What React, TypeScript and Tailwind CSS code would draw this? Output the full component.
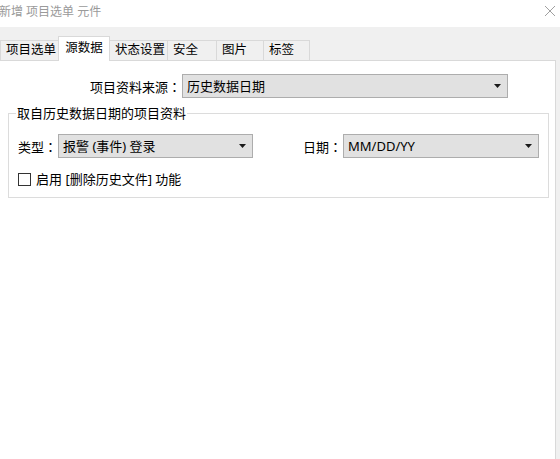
const tabs = [
  { label: "项目选单", w: "w-[59px]" },
  { label: "源数据", w: "w-[52px]" },
  { label: "状态设置", w: "w-[59px]" },
  { label: "安全", w: "w-[50px]" },
  { label: "图片", w: "w-[48px]" },
  { label: "标签", w: "w-[47px]" },
];

function Arrow() {
  return (
    <svg width="7" height="4" viewBox="0 0 7 4" className="shrink-0">
      <path d="M0 0h7L3.5 4z" fill="#1a1a1a" />
    </svg>
  );
}

function Combo({ value, w }: { value: string; w: string }) {
  return (
    <div
      className={`${w} h-[24px] flex items-center justify-between pl-[4px] pr-[6px] bg-[#e1e1e1] border border-[#adadad] text-[13px] leading-none`}
    >
      <span>{value}</span>
      <Arrow />
    </div>
  );
}

function Label({ text }: { text: string }) {
  return (
    <span className="leading-none font-['Noto_Sans_CJK_SC',sans-serif]">
      {text}
      <span className="font-['Noto_Sans_CJK_TC',sans-serif]">：</span>
    </span>
  );
}

export default function App() {
  return (
    <div className="w-[560px] h-[459px] flex flex-col bg-[#f0f0f0] text-black font-['Segoe_UI','Noto_Sans','Noto_Sans_CJK_SC',sans-serif] overflow-hidden">
      {/* title bar */}
      <div className="h-[27px] shrink-0 bg-white flex items-center justify-between pr-[4px]">
        <span className="text-[12px] leading-none text-[#9a9a9a] -ml-[1px] -mt-[4px]">新增 项目选单 元件</span>
        <svg width="12" height="12" viewBox="0 0 12 12" className="-mt-[5px]">
          <path d="M1 1l10 10M11 1L1 11" stroke="#a0a0a0" strokeWidth="1" />
        </svg>
      </div>

      {/* tabs */}
      <div className="h-[33px] shrink-0 flex items-end">
        {tabs.map((t, i) =>
          i === 1 ? (
            <div
              key={t.label}
              className={`${t.w} h-[25px] -ml-px -mb-px relative z-10 bg-white border border-b-0 border-[#d9d9d9] flex justify-center pt-[2px] text-[12.5px] leading-[18px]`}
            >
              {t.label}
            </div>
          ) : (
            <div
              key={t.label}
              className={`${t.w} h-[20px] ${i === 0 ? "" : "-ml-px"} border border-b-0 border-[#d9d9d9] flex items-center pl-[5px] text-[12.5px] leading-none`}
            >
              {t.label}
            </div>
          )
        )}
      </div>

      {/* panel */}
      <div className="flex-1 mr-[4px] bg-white border-t border-r border-[#d9d9d9] pt-[13px] text-[13px]">
        <div className="w-[508px] flex items-center justify-end gap-[1px]">
          <Label text="项目资料来源" />
          <Combo value="历史数据日期" w="w-[326px]" />
        </div>

        <fieldset className="ml-[8px] mt-[6px] w-[541px] border border-[#dcdcdc] pl-[7px] pr-[9px] pb-[11px]">
          <legend className="px-[1px] leading-[18px]">取自历史数据日期的项目资料</legend>
          <div className="pl-[2px] mt-[12px] flex items-center justify-between">
            <div className="flex items-center gap-[1px]">
              <Label text="类型" />
              <Combo value="报警 (事件) 登录" w="w-[195px]" />
            </div>
            <div className="flex items-center gap-[1px]">
              <Label text="日期" />
              <Combo value="MM/DD/YY" w="w-[196px]" />
            </div>
          </div>
          <div className="pl-[2px] mt-[15px] flex items-center gap-[5px]">
            <span className="w-[13px] h-[13px] border border-[#333] bg-white" />
            <span className="leading-none">启用 [删除历史文件] 功能</span>
          </div>
        </fieldset>
      </div>
    </div>
  );
}
